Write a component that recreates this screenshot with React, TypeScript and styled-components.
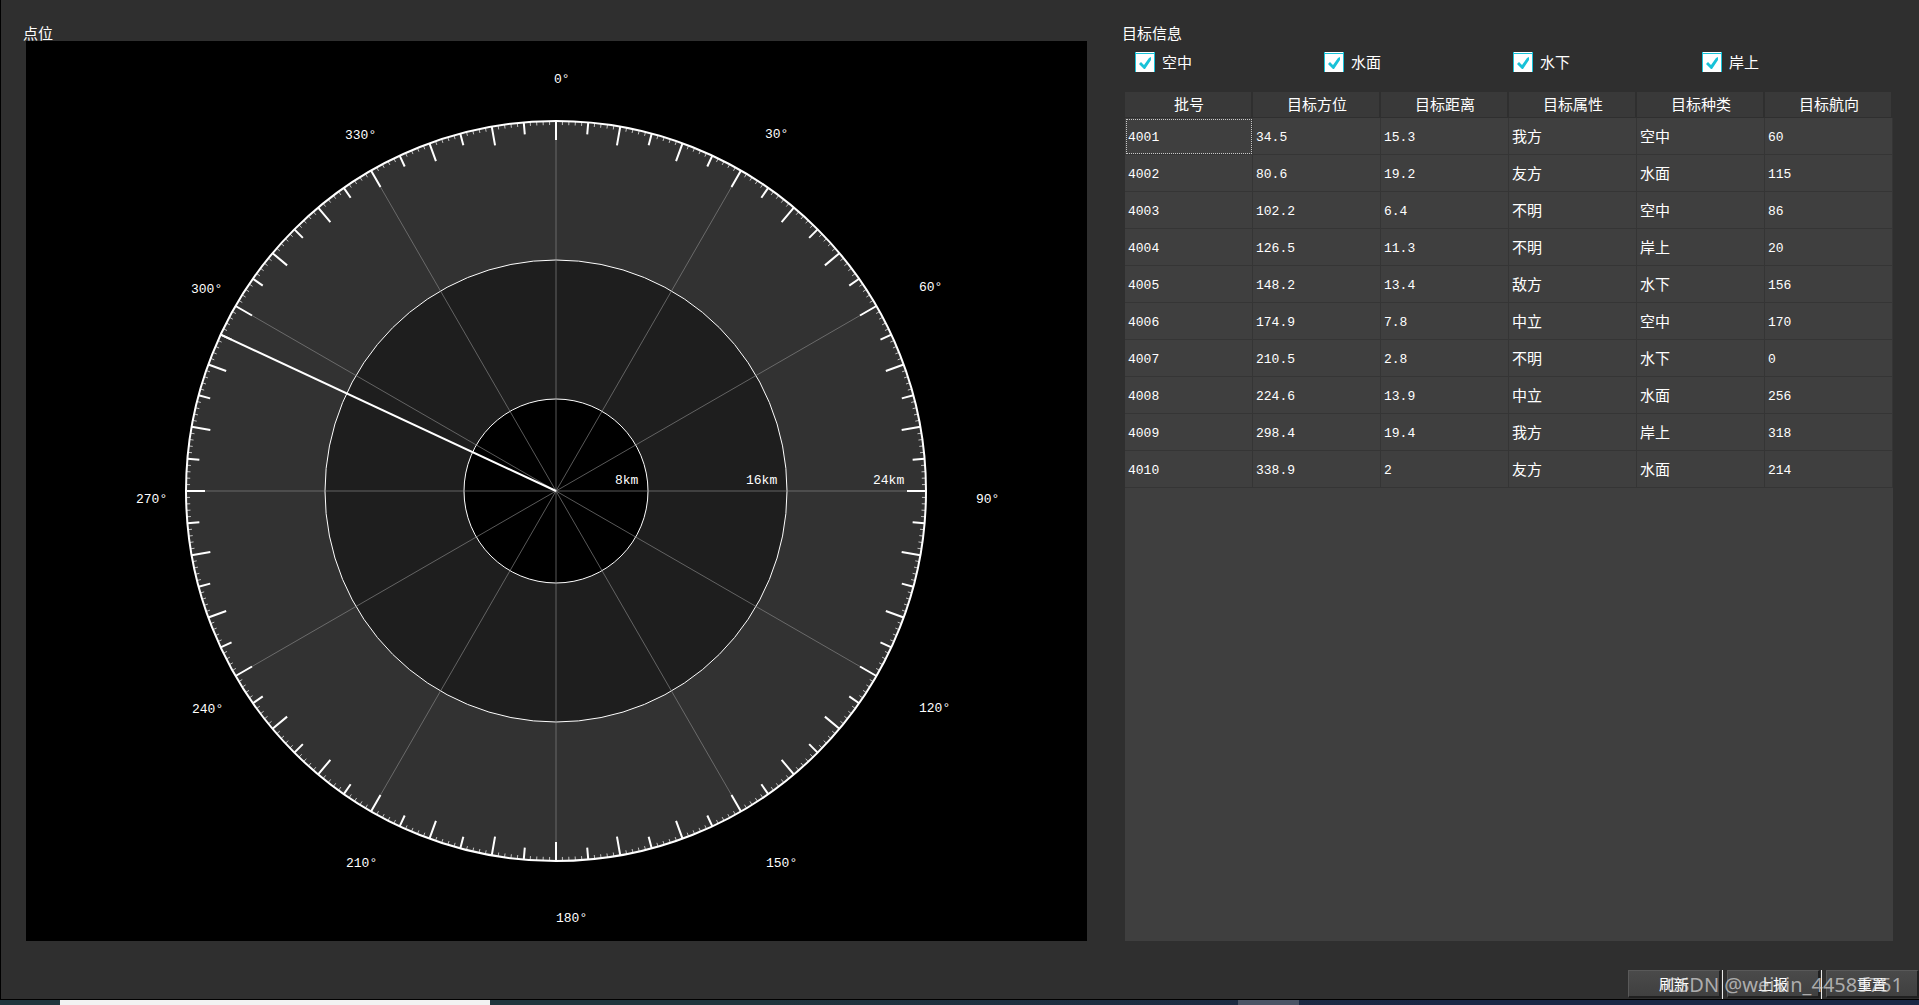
import React from 'react';
import styled, { createGlobalStyle } from 'styled-components';

const GlobalStyle = createGlobalStyle`
  * { box-sizing: border-box; }
  html, body, #root { height: 100%; margin: 0; }
  body {
    background: #2f2f2f;
    color: #fff;
    font: 15px/20px "Noto Sans CJK SC", sans-serif;
    overflow: hidden;
  }
`;

const Page = styled.div`
  display: flex;
  flex-direction: column;
  height: 100%;
`;

const Window = styled.main`
  position: relative;
  flex: 1;
  min-height: 0;
  display: flex;
  flex-direction: column;
  border-left: 1px solid #000;
  border-bottom: 1px solid #000;
`;

const Columns = styled.div`
  flex: 1;
  min-height: 0;
  display: grid;
  grid-template-columns: minmax(0, 1061fr) minmax(0, 768fr);
  column-gap: 38px;
  padding: 23px 26px 0 25px;
`;

const Panel = styled.section`
  display: flex;
  flex-direction: column;
  min-height: 0;
`;

const Title = styled.h2`
  margin: 0 0 0 -3px;
  padding-top: 2px;
  font: inherit;
  line-height: 16px;
`;

const Plot = styled.svg`
  display: block;
  flex: 1;
  width: 100%;
  min-height: 0;
  background: #000;
`;

const PlotText = styled.text`
  fill: #fff;
  font: 13px "Liberation Mono", monospace;
`;

const Filters = styled.div`
  display: grid;
  grid-template-columns: repeat(4, 189px);
  align-items: start;
  height: 51px;
  padding: 11px 0 0 10px;
`;

const Filter = styled.label`
  display: flex;
  align-items: center;
  gap: 7px;
`;

const BoxWrap = styled.span`
  display: grid;
  width: 20px;
  height: 20px;
  > * { grid-area: 1 / 1; }
`;

const Box = styled.input`
  appearance: none;
  width: 20px;
  height: 20px;
  margin: 0;
  background: #fff;
  border: 1px solid #18c2d8;
  border-top: 0;
  border-bottom: 0;
  box-shadow: inset 0 1px #fff, inset 0 2px #18c2d8;
`;

const Tick = styled.svg`
  width: 20px;
  height: 20px;
  pointer-events: none;
  visibility: hidden;
  ${Box}:checked + & { visibility: visible; }
`;

const TableArea = styled.div`
  flex: 1;
  min-height: 0;
  background: #3f3f3f;
`;

const Table = styled.table`
  width: 100%;
  table-layout: fixed;
  border-collapse: separate;
  border-spacing: 0;
`;

const Head = styled.th`
  height: 26px;
  padding: 0 0 2px 2px;
  background: #393939;
  border-right: 2px solid #2f2f2f;
  border-bottom: 1px solid #2f2f2f;
  font-weight: 400;
  line-height: 20px;
  text-align: center;
`;

const Cell = styled.td<{ $numeric?: boolean; $focused?: boolean }>`
  height: 37px;
  padding: ${(p) => (p.$numeric ? '4px' : '0')} 0 0 3px;
  border-right: 1px solid #353535;
  border-bottom: 1px solid #353535;
  ${(p) => p.$numeric && 'font: 13px/20px "Liberation Mono", monospace;'}
  ${(p) => p.$focused && 'outline: 1px dotted #c8c8c8; outline-offset: -2px;'}
`;

const Actions = styled.footer`
  display: flex;
  justify-content: flex-end;
  align-items: center;
  height: 58px;
  padding-top: 28px;
`;

const Action = styled.button`
  width: 93px;
  height: 28px;
  padding: 0;
  color: #fff;
  background: linear-gradient(#4a4a4a, #404040);
  border: 1px solid #595959;
  border-right: 2px solid #202020;
  border-bottom: 2px solid #202020;
  font: inherit;
`;

const Rule = styled.span`
  width: 1px;
  height: 29px;
  margin: 0 4px 0 1px;
  background: #e8e8e8;
`;

const Watermark = styled.span`
  position: absolute;
  right: 16px;
  bottom: 2px;
  color: rgba(220, 220, 220, 0.7);
  font: 20px/24px "Noto Sans", sans-serif;
  pointer-events: none;
`;

const Desktop = styled.div`
  display: grid;
  grid-template-columns: 60px 430px 748px 61px 1fr;
  height: 5px;
  background: linear-gradient(90deg, #20353d 0%, #20353d 40%, #1a2745 75%);
`;

const Strip = styled.span<{ $color: string; $column: number }>`
  grid-column: ${(p) => p.$column};
  grid-row: 1;
  background: ${(p) => p.$color};
`;

const RADIUS = 370;
const CX = 530;
const CY = 450;

const at = (deg: number, r: number) => {
  const a = (deg * Math.PI) / 180;
  return [CX + r * Math.sin(a), CY - r * Math.cos(a)];
};

const ray = (deg: number, from: number, to: number) => {
  const [x1, y1] = at(deg, from);
  const [x2, y2] = at(deg, to);
  return `M${x1} ${y1}L${x2} ${y2}`;
};

const degrees = Array.from({ length: 360 }, (_, i) => i);
const spokes = degrees.filter((d) => d % 30 === 0).map((d) => ray(d, 0, RADIUS)).join('');
const minor = degrees.filter((d) => d % 5).map((d) => ray(d, RADIUS - 4, RADIUS)).join('');
const medium = degrees.filter((d) => d % 10 === 5).map((d) => ray(d, RADIUS - 12, RADIUS)).join('');
const major = degrees.filter((d) => d % 10 === 0).map((d) => ray(d, RADIUS - 19, RADIUS)).join('');

const plotLabels: [string, number, number][] = [
  ['0°', 528, 42],
  ['30°', 739, 97],
  ['60°', 893, 250],
  ['90°', 950, 462],
  ['120°', 893, 671],
  ['150°', 740, 826],
  ['180°', 530, 881],
  ['210°', 320, 826],
  ['240°', 166, 672],
  ['270°', 110, 462],
  ['300°', 165, 252],
  ['330°', 319, 98],
  ['8km', 589, 443],
  ['16km', 720, 443],
  ['24km', 847, 443],
];

function Radar() {
  return (
    <Plot viewBox="0 0 1061 900" role="img" aria-label="点位">
      <circle cx={CX} cy={CY} r={RADIUS} fill="#323232" />
      <circle cx={CX} cy={CY} r={231} fill="#1e1e1e" stroke="#fff" />
      <circle cx={CX} cy={CY} r={92} fill="#000" stroke="#fff" />
      <path d={spokes} stroke="#888" strokeOpacity={0.65} fill="none" />
      <path d={minor} stroke="#c0c0c0" fill="none" />
      <path d={medium} stroke="#fff" strokeWidth={2} fill="none" />
      <path d={major} stroke="#fff" strokeWidth={2} fill="none" />
      <circle cx={CX} cy={CY} r={RADIUS} fill="none" stroke="#fff" strokeWidth={2} />
      <path d={ray(295, 0, RADIUS)} stroke="#fff" strokeWidth={2} />
      {plotLabels.map(([label, x, y]) => (
        <PlotText key={label} x={x} y={y}>{label}</PlotText>
      ))}
    </Plot>
  );
}

const filters = ['空中', '水面', '水下', '岸上'];
const headings = ['批号', '目标方位', '目标距离', '目标属性', '目标种类', '目标航向'];
const rows = [
  ['4001', '34.5', '15.3', '我方', '空中', '60'],
  ['4002', '80.6', '19.2', '友方', '水面', '115'],
  ['4003', '102.2', '6.4', '不明', '空中', '86'],
  ['4004', '126.5', '11.3', '不明', '岸上', '20'],
  ['4005', '148.2', '13.4', '敌方', '水下', '156'],
  ['4006', '174.9', '7.8', '中立', '空中', '170'],
  ['4007', '210.5', '2.8', '不明', '水下', '0'],
  ['4008', '224.6', '13.9', '中立', '水面', '256'],
  ['4009', '298.4', '19.4', '我方', '岸上', '318'],
  ['4010', '338.9', '2', '友方', '水面', '214'],
];

export default function App() {
  return (
    <Page>
      <GlobalStyle />
      <Window>
        <Columns>
          <Panel>
            <Title>点位</Title>
            <Radar />
          </Panel>
          <Panel>
            <Title>目标信息</Title>
            <Filters>
              {filters.map((name) => (
                <Filter key={name}>
                  <BoxWrap>
                    <Box type="checkbox" defaultChecked />
                    <Tick viewBox="0 0 20 20">
                      <path d="M4 12L6 10L9 13L14 6L16 5V8L10 17H9Z" fill="#18c2d8" />
                    </Tick>
                  </BoxWrap>
                  {name}
                </Filter>
              ))}
            </Filters>
            <TableArea>
              <Table>
                <thead>
                  <tr>{headings.map((h) => <Head key={h}>{h}</Head>)}</tr>
                </thead>
                <tbody>
                  {rows.map((row, r) => (
                    <tr key={row[0]}>
                      {row.map((value, c) => (
                        <Cell key={c} $numeric={c < 3 || c === 5} $focused={r === 0 && c === 0}>
                          {value}
                        </Cell>
                      ))}
                    </tr>
                  ))}
                </tbody>
              </Table>
            </TableArea>
          </Panel>
        </Columns>
        <Actions>
          <Action type="button">刷新</Action>
          <Rule />
          <Action type="button">上报</Action>
          <Rule />
          <Action type="button">重置</Action>
        </Actions>
        <Watermark>CSDN @weixin_44585751</Watermark>
      </Window>
      <Desktop>
        <Strip $column={2} $color="#f2f2f2" />
        <Strip $column={4} $color="#4b5566" />
      </Desktop>
    </Page>
  );
}
